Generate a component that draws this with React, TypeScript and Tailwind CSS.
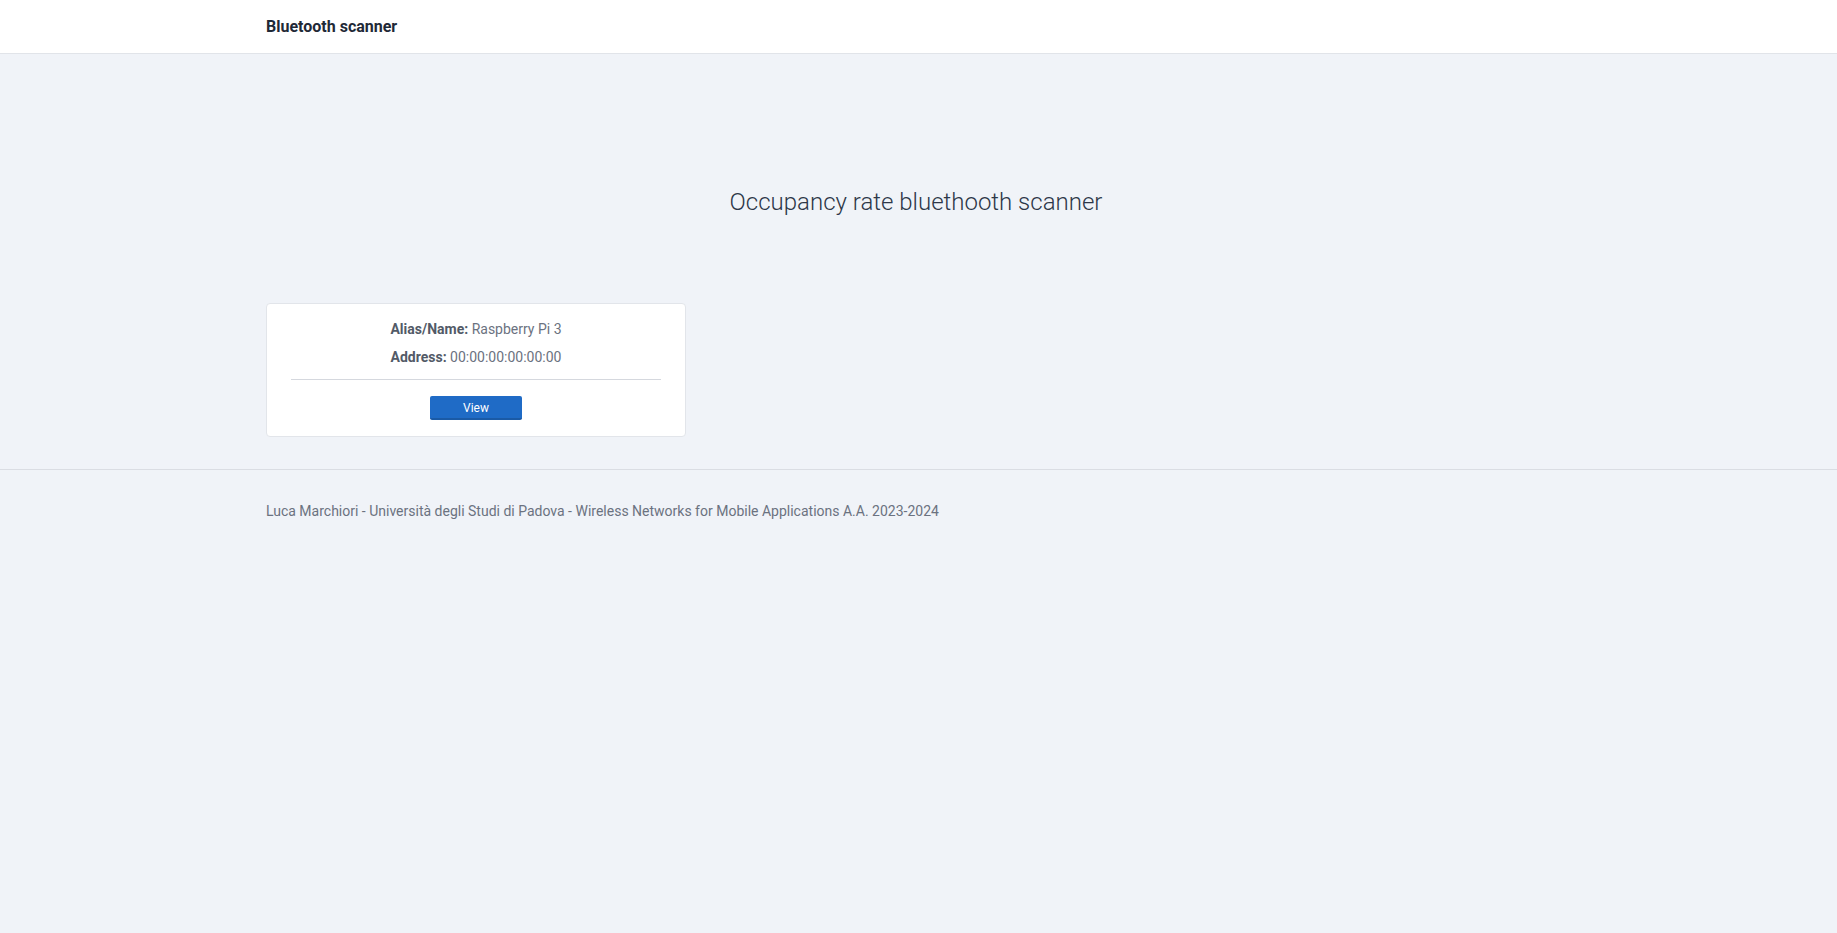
import React from "react";

type Device = { alias: string; address: string };

const devices: Device[] = [{ alias: "Raspberry Pi 3", address: "00:00:00:00:00:00" }];

function DeviceCard({ device }: { device: Device }) {
  return (
    <div className="bg-white border border-[#e2e5ea] rounded-[4px] px-6 pt-[15px] pb-[16px] flex flex-col items-center text-sm text-[#6b7280]">
      <p className="leading-5">
        <span className="font-bold text-[#525a67]">Alias/Name:</span> {device.alias}
      </p>
      <p className="leading-5 mt-2">
        <span className="font-bold text-[#525a67]">Address:</span> {device.address}
      </p>
      <div className="w-full border-t border-[#d5d8de] mt-3" />
      <button className="mt-4 w-[92px] h-[24px] pt-[2px] bg-[#1f6bc6] border-b-2 border-[#1a5aa6] rounded-[2px] text-white text-xs leading-none">
        View
      </button>
    </div>
  );
}

export default function App() {
  return (
    <div
      className="min-h-screen bg-[#f0f3f8] text-[#1f2937]"
      style={{ fontFamily: "Roboto, 'Liberation Sans', sans-serif" }}
    >
      {/* Header */}
      <header className="bg-white border-b border-[#e1e4e9]">
        <div className="w-[1305px] mx-auto h-[53px] flex items-center">
          <span className="font-bold text-base text-[#1f2937]">Bluetooth scanner</span>
        </div>
      </header>

      {/* Main */}
      <main className="pt-[132px] pb-[32px]">
        <div className="w-[1305px] mx-auto">
          <h1 className="text-center text-2xl leading-8 font-light text-[#2d3748] pr-[5px]">
            Occupancy rate bluethooth scanner
          </h1>
          <div className="grid grid-cols-[420px_1fr] mt-[85px]">
            {devices.map((d) => (
              <DeviceCard key={d.address} device={d} />
            ))}
          </div>
        </div>
      </main>

      {/* Footer */}
      <footer className="border-t border-[#dadde3] pt-[31px]">
        <div className="w-[1305px] mx-auto text-sm leading-5 text-[#6b7280]">
          Luca Marchiori - Università degli Studi di Padova - Wireless Networks for Mobile Applications A.A. 2023-2024
        </div>
      </footer>
    </div>
  );
}
